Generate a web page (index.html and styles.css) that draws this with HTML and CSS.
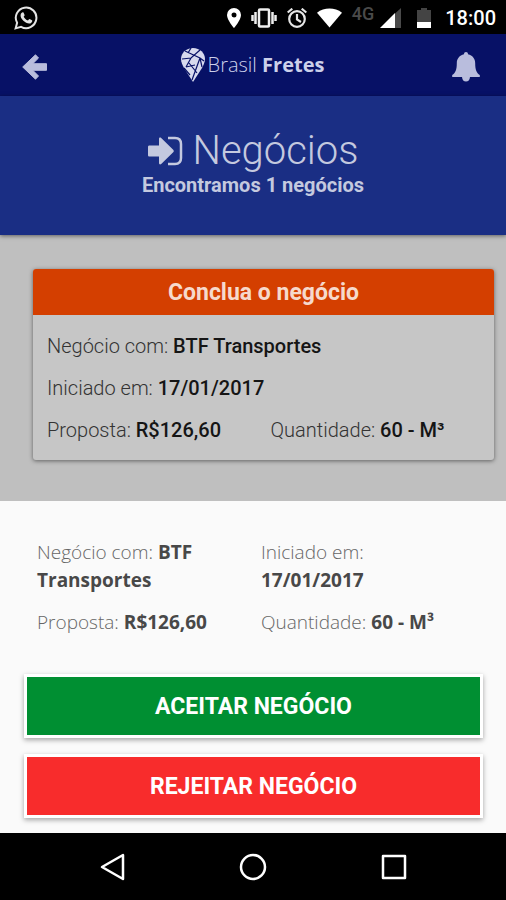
FILE: index.html
```html
<!DOCTYPE html>
<html lang="pt-BR">
<head>
    <meta charset="UTF-8">
    <meta name="viewport" content="width=device-width, initial-scale=1.0">
    <title>Brasil Fretes - Negócios</title>
    <link rel="stylesheet" href="styles.css">
</head>
<body>
    <div class="status-bar">
        <svg class="whatsapp" width="24" height="24" viewBox="0 0 24 24" fill="none" stroke="#e4e4e4" stroke-width="2">
            <path d="M1.600 22.400l1.500-5.600a10.300 10.300 0 1 1 4 4z"/>
            <path fill="#e4e4e4" stroke="none" d="M8.300 6.500c.5-.3 1-.2 1.300.3l1 2.300c.2.500-.6 1.200-.9 1.700 1 1.900 2.300 3 4.300 3.800.5-.5 1.100-1.600 1.600-1.500l2.400 1.200c.8.500-.2 2.300-1.200 2.900-2.300 1.100-5.300-.6-7.400-2.500-2-1.900-3.300-4.200-2.700-6.300.2-.8.900-1.600 1.600-1.900z"/>
        </svg>
        <div class="status-icons">
            <svg width="14" height="20" viewBox="0 0 14 20"><path fill="#fff" fill-rule="evenodd" d="M7 0a7 7 0 0 0-7 7c0 5 7 13 7 13s7-8 7-13a7 7 0 0 0-7-7zm0 4.500a2.500 2.500 0 1 1 0 5 2.500 2.500 0 0 1 0-5z"/></svg>
            <svg width="26" height="20" viewBox="0 0 26 20" fill="none" stroke="#eee" stroke-width="2.500"><rect x="8" y="1.500" width="10" height="17" rx="1"/><path d="M4.500 4v12M1.500 7v6M21.500 4v12M24.500 7v6"/></svg>
            <svg width="20" height="20" viewBox="0 0 20 20" fill="none" stroke="#e6e6e6" stroke-width="2.200"><circle cx="10" cy="11" r="7.800"/><path d="M10 6v5.500l4 2.500M.7 4.500l4.600-3.800M19.300 4.500L14.700.7"/></svg>
            <svg width="25" height="20" viewBox="0 0 26 20"><path fill="#fff" d="M0 4.500C7.500-1.200 18.500-1.200 26 4.500L13 20z"/></svg>
            <span class="network">4G</span>
            <svg width="21" height="20" viewBox="0 0 21 20"><path fill="#4a4a4a" d="M15 5.500L21 0v20h-6z"/><path fill="#fff" d="M0 20L15 5v15z"/></svg>
            <svg class="battery" width="14" height="20" viewBox="0 0 14 20"><path fill="#444" d="M4 0h6v2h4v12H0V2h4z"/><path fill="#fff" d="M0 14h14v6H0z"/></svg>
            <span class="clock">18:00</span>
        </div>
    </div>

    <header class="top-bar">
        <button class="icon-button" aria-label="Voltar">
            <svg width="25" height="26" viewBox="0 0 25 26"><path fill="#b9bddd" stroke="#b9bddd" stroke-linejoin="round" d="M.7 13L13.500.8l3 3.200-5.700 5.700H24.500v6.600H10.800l5.700 5.700-3 3.200z"/></svg>
        </button>
        <div class="brand">
            <svg width="24" height="34" viewBox="0 0 24 34">
                <path fill="#d7daee" d="M12 0C5 0 0 5 0 11c0 3 1.500 6 3 9l9 14 9-14c1.500-3 3-6 3-9C24 5 19 0 12 0z"/>
                <path fill="none" stroke="#071166" stroke-width="1.200" d="M1 11l9-1 9-8M4 3l15 7 4 3M10 0l-3 5M10 10l-5 9M8 15l8 10M19 10l-8 22M19 10l2 9M3 20l6 7M5 19l9-2"/>
            </svg>
            <span class="brand-name">Brasil <b>Fretes</b></span>
        </div>
        <button class="icon-button" aria-label="Notificações">
            <svg width="28" height="30" viewBox="0 0 28 30"><path fill="#b9bddd" d="M14 0c1.200 0 2 .9 2 2.200 4.500 1 7.200 4.500 7.200 9 0 6.500 1.300 9.500 4.600 11.800v2H18c-.3 2.900-1.700 4.600-4 4.600s-3.700-1.700-4-4.600H.2v-2c3.300-2.300 4.600-5.300 4.600-11.800 0-4.500 2.700-8 7.200-9C12 .9 12.800 0 14 0z"/></svg>
        </button>
    </header>

    <section class="hero">
        <h1>
            <svg width="36" height="30" viewBox="0 0 36 30"><path fill="#c4c9df" d="M2.500 9.500H12V3c0-1.400 1.200-1.800 2.200-.9l12 11.600c.8.800.8 1.800 0 2.600l-12 11.600c-1 .9-2.200.5-2.200-.9v-6.500H2.500C1.500 20.500 1 20 1 19v-8c0-1 .5-1.500 1.500-1.500z"/><path fill="none" stroke="#c4c9df" stroke-width="2.500" d="M21 2h7c4 0 6 2 6 6v14c0 4-2 6-6 6h-7"/></svg>
            Negócios
        </h1>
        <p>Encontramos 1 negócios</p>
    </section>

    <main class="deals">
        <article class="card">
            <h2>Conclua o negócio</h2>
            <div class="card-body">
                <p class="full">Negócio com: <b>BTF Transportes</b></p>
                <p class="full">Iniciado em: <b>17/01/2017</b></p>
                <p>Proposta: <b>R$126,60</b></p>
                <p>Quantidade: <b>60 - M³</b></p>
            </div>
        </article>
    </main>

    <section class="sheet">
        <div class="summary">
            <p>Negócio com: <b>BTF Transportes</b></p>
            <p>Iniciado em: <b>17/01/2017</b></p>
            <p>Proposta: <b>R$126,60</b></p>
            <p>Quantidade: <b>60 - M³</b></p>
        </div>
        <div class="actions">
            <button class="btn accept">ACEITAR NEGÓCIO</button>
            <button class="btn reject">REJEITAR NEGÓCIO</button>
        </div>
    </section>

    <nav class="nav-bar">
        <button class="icon-button" aria-label="Voltar"><svg width="28" height="28" viewBox="0 0 28 28" fill="none" stroke="#fff" stroke-width="2.500" stroke-linejoin="round"><path d="M4 14L25 2v24z"/></svg></button>
        <button class="icon-button" aria-label="Início"><svg width="28" height="28" viewBox="0 0 28 28" fill="none" stroke="#fff" stroke-width="2.500"><circle cx="14" cy="14" r="12"/></svg></button>
        <button class="icon-button" aria-label="Recentes"><svg width="28" height="28" viewBox="0 0 28 28" fill="none" stroke="#fff" stroke-width="2.500" stroke-linejoin="round"><rect x="3" y="3" width="22" height="22"/></svg></button>
    </nav>
</body>
</html>
```
FILE: styles.css
```css
* {
    box-sizing: border-box;
}

body {
    margin: 0;
    min-height: 100vh;
    display: flex;
    flex-direction: column;
    background-color: #000;
    font-family: Roboto, "Liberation Sans", sans-serif;
    font-size: 20px;
    line-height: 28px;
}

h1, h2, p {
    margin: 0;
}

svg {
    display: block;
    flex: none;
}

.icon-button {
    padding: 0;
    border: 0;
    background: none;
    cursor: pointer;
}

/* Android status bar */
.status-bar {
    height: 34px;
    padding: 2px 10px 0 14px;
    display: flex;
    align-items: center;
    justify-content: space-between;
    background-color: #000;
    color: #fff;
}

.status-icons {
    display: flex;
    align-items: center;
    gap: 10px;
}

.network {
    align-self: flex-start;
    margin-right: -4px;
    color: #4a4a4a;
    font-size: 18px;
    font-weight: 500;
    line-height: 20px;
}

.battery {
    margin: 0 4px 0 6px;
}

.clock {
    font-weight: 500;
}

.top-bar {
    height: 62px;
    padding: 0 26px 0 22px;
    display: flex;
    align-items: center;
    justify-content: space-between;
    background-color: #071166;
    box-shadow: 0 2px 4px rgba(0, 0, 0, 0.3);
    z-index: 1;
}

.top-bar .icon-button {
    padding-top: 4px;
}

.brand {
    padding-left: 6px;
    display: flex;
    align-items: center;
    gap: 3px;
    color: #ccd0ea;
}

.brand-name {
    font-family: "Open Sans", sans-serif;
    font-size: 20px;
    font-weight: 300;
}

.brand-name b {
    font-weight: 700;
}

.hero {
    height: 139px;
    padding-top: 33px;
    background-color: #1a2e84;
    color: #c4c9df;
    text-align: center;
    box-shadow: 0 1px 4px rgba(0, 0, 0, 0.5);
    z-index: 1;
}

.hero h1 {
    display: flex;
    align-items: center;
    justify-content: center;
    gap: 9px;
    font-size: 40px;
    font-weight: 300;
    line-height: 44px;
}

.hero p {
    font-weight: 700;
    line-height: 24px;
}

.deals {
    padding: 34px 12px 41px 33px;
    background-color: #bfbfbf;
}

.card {
    border-radius: 3px;
    overflow: hidden;
    background-color: #c6c6c6;
    box-shadow: 0 1px 4px rgba(0, 0, 0, 0.5);
}

.card h2 {
    padding-top: 2px;
    background-color: #d43f00;
    color: #f6d9cc;
    font-size: 23px;
    font-weight: 700;
    line-height: 44px;
    text-align: center;
}

.card-body {
    padding: 17px 14px 16px;
    display: grid;
    grid-template-columns: 1fr 1fr;
    column-gap: 14px;
    row-gap: 14px;
    color: #333;
    font-weight: 300;
}

.card-body b {
    color: #151515;
    font-weight: 500;
}

.full {
    grid-column: 1 / -1;
}

/* bottom sheet */
.sheet {
    flex: 1;
    padding: 37px 23px 15px 24px;
    background-color: #fafafa;
}

.summary {
    padding: 0 22px 0 13px;
    display: grid;
    grid-template-columns: 1fr 1fr;
    gap: 14px 24px;
    color: #666;
    font-family: "Open Sans", sans-serif;
    font-size: 19px;
    font-weight: 300;
}

.summary b {
    color: #484848;
    font-weight: 700;
}

.actions {
    margin-top: 38px;
    display: flex;
    flex-direction: column;
    gap: 16px;
}

.btn {
    width: 100%;
    height: 64px;
    border: 3px solid #fff;
    color: #fff;
    font-family: inherit;
    font-size: 23px;
    font-weight: 700;
    box-shadow: 0 2px 5px rgba(0, 0, 0, 0.35);
    cursor: pointer;
}

.accept {
    background-color: #008f32;
}

.reject {
    background-color: #f82c2c;
}

.nav-bar {
    height: 67px;
    padding: 0 98px;
    display: flex;
    align-items: center;
    justify-content: space-between;
    background-color: #000;
}
```
